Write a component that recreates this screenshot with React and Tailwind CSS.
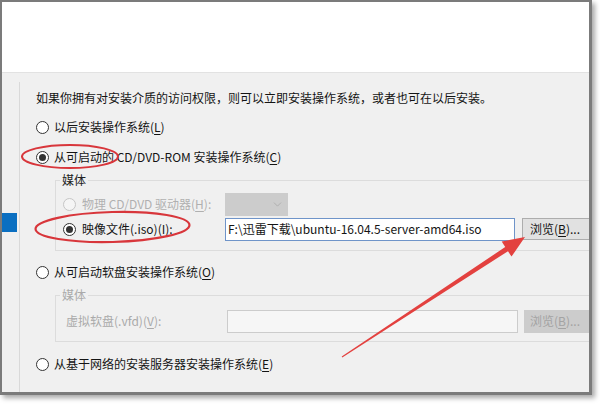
import React from 'react';
import { ChevronDown } from 'lucide-react';

const Radio = ({ checked, disabled }) => (
  <span
    className={`w-[13px] h-[13px] rounded-full border flex items-center justify-center shrink-0 ${
      disabled ? 'border-[#c6c6c6] bg-[#f5f5f5]' : 'border-[#333333] bg-white'
    }`}
  >
    {checked && <span className="w-[7px] h-[7px] rounded-full bg-[#333333]" />}
  </span>
);

const Key = ({ k }) => (
  <>
    (<span className="underline underline-offset-2">{k}</span>)
  </>
);

export default function App() {
  return (
    <div className="relative w-[600px] h-[404px] bg-white overflow-hidden font-['Noto_Sans_CJK_SC',sans-serif] text-[12px] leading-[16px] text-[#141414]">
      {/* window */}
      <div className="w-[592px] h-[395px] flex flex-col border-l-2 border-t-2 border-r-[3px] border-b-[3px] border-[#7b7b7b] shadow-[3px_3px_5px_rgba(0,0,0,0.35)] overflow-hidden">
        <div className="h-[71px] shrink-0 bg-white border-b border-[#e2e2e2]" />

        <div className="flex-1 min-h-0 flex bg-[#f0f0f0]">
          {/* side pane */}
          <div className="w-[18px] shrink-0 flex flex-col">
            <div className="mt-[9px] flex-1 border-r border-[#d9d9d9]">
              <div className="mt-[131px] w-[15px] h-[19px] bg-[#0b6fc1]" />
            </div>
          </div>

          {/* main */}
          <div className="flex-1 min-w-0 pl-[16px] flex flex-col overflow-hidden">
            <div className="mt-[15px] h-[20px] flex items-center whitespace-nowrap">
              如果你拥有对安装介质的访问权限，则可以立即安装操作系统，或者也可在以后安装。
            </div>

            <div className="mt-[9px] h-[20px] flex items-center gap-[5px] whitespace-nowrap">
              <Radio />
              <span>以后安装操作系统<Key k="L" /></span>
            </div>

            <div className="mt-[10px] h-[20px] flex items-center gap-[5px] whitespace-nowrap">
              <Radio checked />
              <span>从可启动的 CD/DVD-ROM 安装操作系统<Key k="C" /></span>
            </div>

            {/* media group 1 */}
            <fieldset className="ml-[19px] mt-[5px] w-[560px] shrink-0 border border-[#dcdcdc] pb-[9px]">
              <legend className="ml-[4px] px-[2px] leading-[16px] text-[#222]">媒体</legend>
              <div className="mt-[4px] h-[24px] pl-[7px] flex items-center whitespace-nowrap">
                <div className="w-[162px] flex items-center gap-[6px] text-[#b0b0b0]">
                  <Radio disabled />
                  <span>物理 CD/DVD 驱动器<Key k="H" />:</span>
                </div>
                <div className="w-[63px] h-[23px] bg-[#cccccc] flex items-center justify-end pr-[4px]">
                  <ChevronDown size={13} strokeWidth={1.4} color="#a8a8a8" />
                </div>
              </div>
              <div className="mt-[1px] h-[24px] pl-[7px] flex items-center whitespace-nowrap">
                <div className="w-[162px] flex items-center gap-[6px]">
                  <Radio checked />
                  <span>映像文件(.iso)<Key k="I" />:</span>
                </div>
                <div className="w-[290px] h-[23px] bg-white border border-[#6f94c9] flex items-center px-[2px] shrink-0">
                  {'F:\\迅雷下载\\ubuntu-16.04.5-server-amd64.iso'}
                </div>
                <div className="ml-[7px] w-[72px] h-[22px] shrink-0 bg-[#e1e1e1] border border-[#adadad] flex items-center pl-[7px]">
                  浏览<Key k="B" />...
                </div>
              </div>
            </fieldset>

            <div className="mt-[11px] h-[20px] flex items-center gap-[5px] whitespace-nowrap">
              <Radio />
              <span>从可启动软盘安装操作系统<Key k="O" /></span>
            </div>

            {/* media group 2 */}
            <fieldset className="ml-[19px] mt-[5px] w-[560px] shrink-0 border border-[#dcdcdc] pb-[8px]">
              <legend className="ml-[4px] px-[2px] leading-[16px] text-[#aaaaaa]">媒体</legend>
              <div className="mt-[6px] h-[24px] pl-[10px] flex items-center whitespace-nowrap">
                <div className="w-[161px] text-[#aaaaaa]">
                  虚拟软盘(.vfd)<Key k="V" />:
                </div>
                <div className="w-[291px] h-[23px] shrink-0 bg-[#f6f6f6] border border-[#cccccc]" />
                <div className="ml-[6px] w-[72px] h-[23px] shrink-0 bg-[#cccccc] flex items-center pl-[6px] text-[#a3a3a3]">
                  浏览<Key k="B" />...
                </div>
              </div>
            </fieldset>

            <div className="mt-[12px] h-[20px] flex items-center gap-[5px] whitespace-nowrap">
              <Radio />
              <span>从基于网络的安装服务器安装操作系统<Key k="E" /></span>
            </div>
          </div>
        </div>
      </div>

      {/* red annotations */}
      <svg className="absolute top-0 left-0 pointer-events-none" width="600" height="404" viewBox="0 0 600 404">
        <ellipse cx="70" cy="156.5" rx="48" ry="11.5" fill="none" stroke="#d8363b" strokeWidth="2" />
        <ellipse cx="112.5" cy="227" rx="77" ry="15" fill="none" stroke="#d8363b" strokeWidth="2.2" transform="rotate(-1.5 112.5 227)" />
        <polygon
          points="342.3,357.4 508,251.2 511.5,256.6 525,237 501.7,241.6 505.2,247 341.7,356.6"
          fill="#e3413f"
        />
      </svg>
    </div>
  );
}
